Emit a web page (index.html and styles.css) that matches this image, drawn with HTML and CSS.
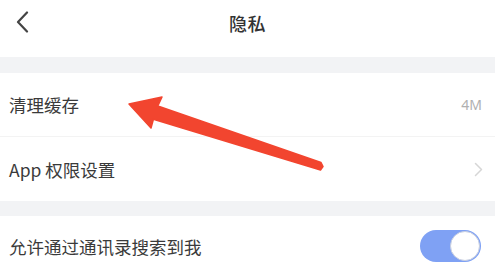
FILE: index.html
```html
<!DOCTYPE html>
<html lang="zh">
<head>
<meta charset="utf-8">
<link rel="stylesheet" href="styles.css">
</head>
<body>
<div class="page">
  <header class="nav">
    <svg class="back" width="14" height="22" viewBox="0 0 14 22"><path d="M12 1.5 L3 11 L12 20.5" fill="none" stroke="#444" stroke-width="2.2" stroke-linecap="round" stroke-linejoin="round"/></svg>
    <h1 class="title">隐私</h1>
  </header>
  <div class="gap"></div>
  <section class="group">
    <div class="row row-first">
      <span class="label">清理缓存</span>
      <span class="value">4M</span>
    </div>
    <div class="row row-second">
      <span class="label">App 权限设置</span>
      <svg class="chev" width="9" height="15" viewBox="0 0 9 15"><path d="M1.5 1.5 L7.5 7.5 L1.5 13.5" fill="none" stroke="#d6d6d6" stroke-width="1.5" stroke-linecap="round" stroke-linejoin="round"/></svg>
    </div>
  </section>
  <div class="gap gap2"></div>
  <section class="group">
    <div class="row row-third">
      <span class="label">允许通过通讯录搜索到我</span>
      <span class="toggle"><span class="knob"></span></span>
    </div>
  </section>
  <svg class="annot" width="495" height="276" viewBox="0 0 495 276">
    <polygon points="129,104 162,97 157.8,106 321,162.5 323,166.5 320.5,170 153.4,119.3 151,128" fill="#f2452f" stroke="#f2452f" stroke-width="1.5" stroke-linejoin="round"/>
  </svg>
</div>
</body>
</html>
```
FILE: styles.css
```css
* { box-sizing: border-box; margin: 0; padding: 0; }
html, body { width: 495px; height: 276px; overflow: hidden; background: #fff; }
body { font-family: "Noto Sans CJK SC", "Noto Sans", sans-serif; color: #333; }
.page { position: relative; width: 495px; height: 276px; background: #fff; }
.nav { height: 57px; display: flex; align-items: center; justify-content: center; position: relative; }
.back { position: absolute; left: 15px; top: 11px; }
.title { font-size: 18px; font-weight: 500; color: #333; margin-top: -12px; letter-spacing: 0.5px; }
.gap { height: 16px; background: #f2f3f5; }
.gap2 { height: 15px; }
.group { background: #fff; }
.row { display: flex; align-items: center; justify-content: space-between; padding: 0 13px 0 9px; }
.row-first { height: 64px; border-bottom: 1px solid #f3f3f3; }
.row-second { height: 64px; }
.row-third { height: 60px; }
.label { font-size: 17.5px; color: #3a3a3a; }
.value { font-size: 14px; color: #b0b0b0; font-family: "Noto Sans", sans-serif; }
.chev { margin-right: -1px; }
.toggle { width: 61px; height: 32px; border-radius: 16px; background: #7fa1f4; display: flex; align-items: center; justify-content: flex-end; padding-right: 1px; margin-right: 1px; }
.knob { width: 30px; height: 30px; border-radius: 50%; background: #fff; border: 1.5px solid #c8cfe0; }
.annot { position: absolute; left: 0; top: 0; pointer-events: none; }
```
